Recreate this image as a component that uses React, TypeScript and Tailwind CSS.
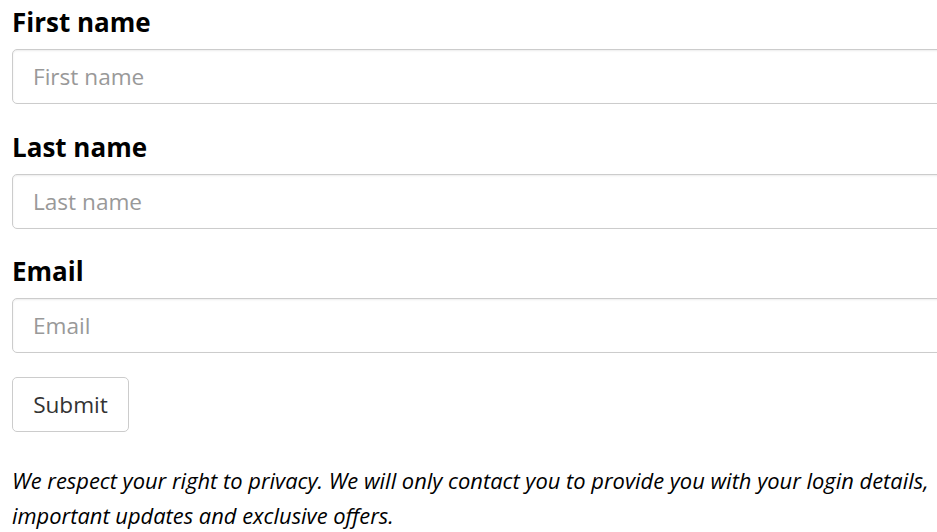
export default function App() {
  const font = { fontFamily: '"Open Sans", sans-serif' };
  const Field = ({ label }: { label: string }) => (
    <div className="mb-[20.5px]">
      <label className="block text-[26px] font-bold leading-[36px] text-black pt-[4px] mb-[9px]">{label}</label>
      <input
        placeholder={label}
        className="block w-[960px] h-[55px] px-[20px] text-[22.6px] text-[#333] placeholder:text-[#999] bg-white border border-[#ccc] rounded-[5px] shadow-[inset_0_1px_2px_rgba(0,0,0,0.08)] outline-none"
      />
    </div>
  );
  return (
    <div className="bg-white w-[937px] h-[532px] overflow-hidden pl-[12px]" style={font}>
      <Field label="First name" />
      <Field label="Last name" />
      <Field label="Email" />
      <button className="block w-[117px] h-[55px] text-[22.6px] text-[#333] bg-white border border-[#ccc] rounded-[5px] mt-[24px]">Submit</button>
      <p className="italic text-[21.9px] leading-[35px] text-black mt-[31px] w-[925px]">
        We respect your right to privacy. We will only contact you to provide you with your login details, important updates and exclusive offers.
      </p>
    </div>
  );
}
